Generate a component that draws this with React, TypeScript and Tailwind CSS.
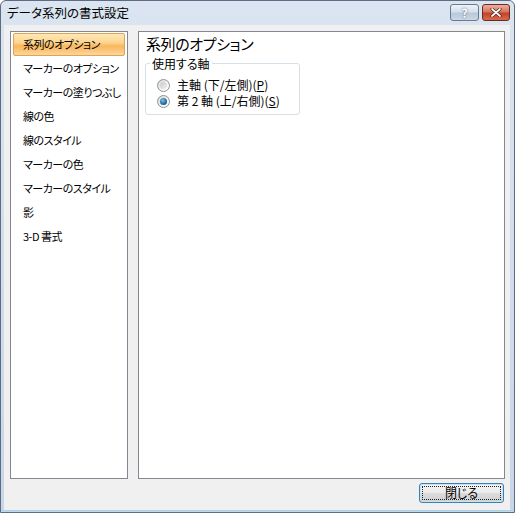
import React from 'react';

const font = "font-['Noto_Sans_CJK_JP','Noto_Sans',sans-serif] [font-feature-settings:'palt']";

const categories = [
  '系列のオプション',
  'マーカーのオプション',
  'マーカーの塗りつぶし',
  '線の色',
  '線のスタイル',
  'マーカーの色',
  'マーカーのスタイル',
  '影',
  '3-D 書式',
];

const Radio: React.FC<{ checked?: boolean }> = ({ checked }) => (
  <span className="w-[13px] h-[13px] rounded-full border border-[#8f9398] bg-[linear-gradient(135deg,#d2d4d6_0%,#f4f4f4_60%,#ffffff_100%)] flex items-center justify-center shrink-0">
    {checked ? (
      <span className="w-[7px] h-[7px] rounded-full bg-[radial-gradient(circle_at_40%_35%,#7fc3ea_0%,#2b6c9f_55%,#123f66_100%)]" />
    ) : (
      <span className="w-[7px] h-[7px] rounded-full bg-[linear-gradient(135deg,#c9cbce,#eeeeee)]" />
    )}
  </span>
);

const App: React.FC = () => {
  return (
    <div
      className={`w-[515px] h-[513px] flex flex-col border border-[#5d6c80] rounded-t-[6px] overflow-hidden bg-[linear-gradient(to_bottom,#dbe5f1,#c8d6e7)] ${font}`}
    >
      {/* title bar */}
      <div className="h-[24px] flex items-center pl-[6px] pr-[4px] shrink-0">
        <span className="text-[12.5px] leading-none text-black whitespace-nowrap">データ系列の書式設定</span>
        <div className="ml-auto flex gap-[3px] self-start mt-[3px]">
          <button className="w-[29px] h-[17px] rounded-[3px] border border-[#6a7a8f] bg-[linear-gradient(to_bottom,#eef3f9_0%,#d5e0ec_45%,#b9c9dc_55%,#c9d7e6_100%)] flex items-center justify-center text-white text-[12px] font-bold leading-none [text-shadow:0_0_2px_#3d4f66]">
            ?
          </button>
          <button className="w-[28px] h-[17px] rounded-[3px] border border-[#6d2a1f] bg-[linear-gradient(to_bottom,#eab0a0_0%,#d7765f_45%,#c2432b_55%,#d86a4c_100%)] flex items-center justify-center">
            <svg width="12" height="9" viewBox="0 0 12 9">
              <path d="M2 1 L10 8 M10 1 L2 8" stroke="#3b0f08" strokeWidth="3" strokeLinecap="round" />
              <path d="M2 1 L10 8 M10 1 L2 8" stroke="#ffffff" strokeWidth="1.8" strokeLinecap="round" />
            </svg>
          </button>
        </div>
      </div>

      {/* client area */}
      <div className="flex-1 ml-[3px] mr-[4px] bg-[#f0f0f0] flex flex-col pt-[6px] pl-[6px] pr-[5px] pb-[7px]">
        <div className="flex gap-[10px] h-[448px]">
          <div className="w-[118px] border border-[#828790] bg-white pt-[1px] px-[2px] flex flex-col gap-[1px]">
            {categories.map((c, i) => (
              <div
                key={c}
                className={`h-[23px] flex items-center pl-[9px] text-[11px] tracking-[-0.5px] leading-none whitespace-nowrap text-black border rounded-[2px] ${
                  i === 0
                    ? 'border-[#dca35a] bg-[linear-gradient(to_bottom,#fee9b4_0%,#fcd592_40%,#f9b65c_58%,#fdd69a_100%)]'
                    : 'border-transparent'
                }`}
              >
                {c}
              </div>
            ))}
          </div>

          <div className="w-[367px] border border-[#828790] bg-white px-[6px] pt-[3px]">
            <div className="pl-[1px] text-[15px] tracking-[-0.4px] leading-[17px] text-black whitespace-nowrap">
              系列のオプション
            </div>
            <fieldset className="mt-[4px] w-[155px] border border-[#d5dfe5] rounded-[3px] pl-[11px] pt-[6px] pb-[5px]">
              <legend className="-ml-[7px] px-[2px] text-[12px] leading-[15px] text-black whitespace-nowrap">使用する軸</legend>
              <div className="flex flex-col">
                <label className="h-[16px] flex items-center gap-[7px] text-[12px] leading-none text-black whitespace-nowrap">
                  <Radio />
                  <span>
                    主軸 (下/左側)(<span className="underline">P</span>)
                  </span>
                </label>
                <label className="h-[16px] flex items-center gap-[7px] text-[12px] leading-none text-black whitespace-nowrap">
                  <Radio checked />
                  <span>
                    第 2 軸 (上/右側)(<span className="underline">S</span>)
                  </span>
                </label>
              </div>
            </fieldset>
          </div>
        </div>

        <div className="flex justify-end mt-[4px] pr-[1px]">
          <button className="w-[85px] h-[20px] rounded-[3px] border border-[#3c7fb1] bg-[linear-gradient(to_bottom,#f4f4f4_0%,#ebebeb_48%,#dcdcdc_52%,#cfcfcf_100%)] p-[2px] shadow-[inset_0_0_0_1px_#c4e5f6]">
            <span className="h-full border border-dotted border-[#222] flex items-center justify-center text-[12px] leading-none text-black">
              閉じる
            </span>
          </button>
        </div>
      </div>

      {/* bottom frame */}
      <div className="h-[1px] bg-[#a3d6ee] shrink-0" />
      <div className="h-[1px] shrink-0" />
    </div>
  );
};

export default App;
